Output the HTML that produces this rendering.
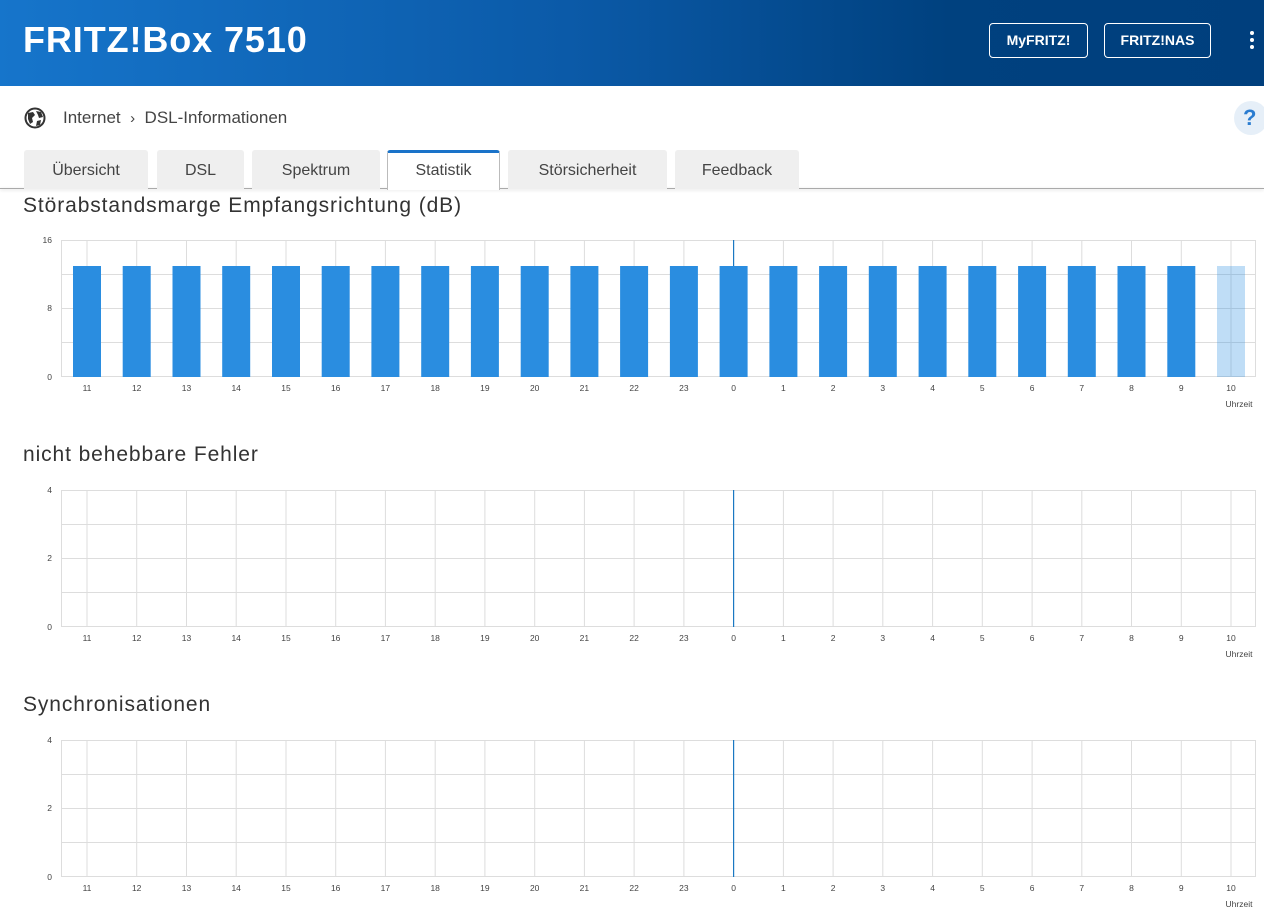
<!DOCTYPE html>
<html><head><meta charset="utf-8">
<style>
*{margin:0;padding:0;box-sizing:border-box}
body{width:1264px;height:913px;overflow:hidden;background:#fff;font-family:"Liberation Sans",sans-serif;color:#333;position:relative}
.hdr{position:absolute;left:0;top:0;width:1264px;height:86px;background:linear-gradient(90deg,#1675cb 0%,#0b5aa8 45%,#00417f 75%,#003f7d 100%)}
.logo{position:absolute;left:23px;top:19px;font-size:36px;font-weight:bold;color:#fff;letter-spacing:0.9px}
.btn{position:absolute;top:23px;height:35px;border:1px solid #fff;border-radius:4px;color:#fff;font-weight:bold;font-size:14px;text-align:center;line-height:33px}
.dots{position:absolute;left:1250px;top:31px;width:5px}
.dots i{display:block;width:4px;height:4px;border-radius:2px;background:#fff;margin-bottom:3px}
.bc{position:absolute;top:108px;left:63px;font-size:17px;color:#444}
.help{position:absolute;left:1234px;top:101px;width:34px;height:34px;border-radius:17px;background:#e6eff8;color:#2a7cd0;font-weight:bold;font-size:22px;line-height:34px;text-indent:9px}
.tab{position:absolute;top:150px;height:39px;background:#efefef;border-radius:3px 3px 0 0;font-size:16px;color:#444;text-align:center;line-height:42px}
.tab.act{background:#fff;border:1px solid #bbb;border-bottom:none;border-top:3px solid #1a73c9;line-height:36px;height:40px}
.line{position:absolute;left:0;top:188px;width:1264px;height:1px;background:#aaa;box-shadow:0 1px 3px rgba(0,0,0,.2)}
h2{position:absolute;left:23px;font-weight:normal;font-size:21px;color:#333;letter-spacing:0.9px}
svg{position:absolute;left:0}
svg text{font-family:"Liberation Sans",sans-serif;font-size:8.5px;fill:#444}
</style></head><body>
<div class="hdr">
<div class="logo">FRITZ!Box 7510</div>
<div class="btn" style="left:989px;width:99px">MyFRITZ!</div>
<div class="btn" style="left:1104px;width:107px">FRITZ!NAS</div>
<div class="dots"><i></i><i></i><i></i></div>
</div>
<svg style="left:24px;top:107px" width="22" height="22" viewBox="0 0 22 22"><circle cx="11" cy="11" r="9.5" fill="none" stroke="#333" stroke-width="2"/><path d="M4 6 L9 5 L11 8 L8 11 L9 15 L6 17 L4 12Z M12 4 L17 5 L19 10 L15 11 L14 8Z M13 14 L17 13 L16 18 L12 19Z" fill="#333"/></svg>
<div class="bc">Internet&nbsp;&nbsp;<span style="font-size:15px">&#8250;</span>&nbsp;&nbsp;DSL-Informationen</div>
<div class="help">?</div>
<div class="line"></div>
<div class="tab" style="left:24px;width:124px">Übersicht</div>
<div class="tab" style="left:157px;width:87px">DSL</div>
<div class="tab" style="left:252px;width:128px">Spektrum</div>
<div class="tab act" style="left:387px;width:113px">Statistik</div>
<div class="tab" style="left:508px;width:159px">Störsicherheit</div>
<div class="tab" style="left:675px;width:124px">Feedback</div>

<h2 style="top:194px">Störabstandsmarge Empfangsrichtung (dB)</h2>
<h2 style="top:443px">nicht behebbare Fehler</h2>
<h2 style="top:693px">Synchronisationen</h2>

<svg style="top:230px" width="1264" height="185" viewBox="0 -10 1264 185">
<g stroke="#ddd" stroke-width="1" fill="none">
<path d="M61 0.5H1256M61 34.5H1256M61 68.5H1256M61 102.5H1256M61 136.5H1256M61.5 0V137M1255.5 0V137"/>
<path d="M87 0V137M136.7 0V137M186.5 0V137M236.2 0V137M286 0V137M335.7 0V137M385.4 0V137M435.2 0V137M484.9 0V137M534.7 0V137M584.4 0V137M634.1 0V137M683.9 0V137M783.4 0V137M833.1 0V137M882.8 0V137M932.6 0V137M982.3 0V137M1032.1 0V137M1081.8 0V137M1131.5 0V137M1181.3 0V137M1231 0V137"/>
</g>
<path d="M733.6 0V137" stroke="#1a78c2" stroke-width="1.2"/>
<g fill="#2a8de0">
<rect x="73" y="26" width="28" height="111"/><rect x="122.7" y="26" width="28" height="111"/><rect x="172.5" y="26" width="28" height="111"/><rect x="222.2" y="26" width="28" height="111"/><rect x="272" y="26" width="28" height="111"/><rect x="321.7" y="26" width="28" height="111"/><rect x="371.4" y="26" width="28" height="111"/><rect x="421.2" y="26" width="28" height="111"/><rect x="470.9" y="26" width="28" height="111"/><rect x="520.7" y="26" width="28" height="111"/><rect x="570.4" y="26" width="28" height="111"/><rect x="620.1" y="26" width="28" height="111"/><rect x="669.9" y="26" width="28" height="111"/><rect x="719.6" y="26" width="28" height="111"/><rect x="769.4" y="26" width="28" height="111"/><rect x="819.1" y="26" width="28" height="111"/><rect x="868.8" y="26" width="28" height="111"/><rect x="918.6" y="26" width="28" height="111"/><rect x="968.3" y="26" width="28" height="111"/><rect x="1018.1" y="26" width="28" height="111"/><rect x="1067.8" y="26" width="28" height="111"/><rect x="1117.5" y="26" width="28" height="111"/><rect x="1167.3" y="26" width="28" height="111"/>
<rect x="1217" y="26" width="28" height="111" fill="#2a8de0" fill-opacity="0.3"/>
</g>
<text x="52" y="3" text-anchor="end">16</text><text x="52" y="71" text-anchor="end">8</text><text x="52" y="140" text-anchor="end">0</text>
<g text-anchor="middle"><text x="87" y="151">11</text><text x="136.7" y="151">12</text><text x="186.5" y="151">13</text><text x="236.2" y="151">14</text><text x="286" y="151">15</text><text x="335.7" y="151">16</text><text x="385.4" y="151">17</text><text x="435.2" y="151">18</text><text x="484.9" y="151">19</text><text x="534.7" y="151">20</text><text x="584.4" y="151">21</text><text x="634.1" y="151">22</text><text x="683.9" y="151">23</text><text x="733.6" y="151">0</text><text x="783.4" y="151">1</text><text x="833.1" y="151">2</text><text x="882.8" y="151">3</text><text x="932.6" y="151">4</text><text x="982.3" y="151">5</text><text x="1032.1" y="151">6</text><text x="1081.8" y="151">7</text><text x="1131.5" y="151">8</text><text x="1181.3" y="151">9</text><text x="1231" y="151">10</text><text x="1239" y="167">Uhrzeit</text></g>
</svg>

<svg style="top:480px" width="1264" height="185" viewBox="0 -10 1264 185">
<g stroke="#ddd" stroke-width="1" fill="none">
<path d="M61 0.5H1256M61 34.5H1256M61 68.5H1256M61 102.5H1256M61 136.5H1256M61.5 0V137M1255.5 0V137"/>
<path d="M87 0V137M136.7 0V137M186.5 0V137M236.2 0V137M286 0V137M335.7 0V137M385.4 0V137M435.2 0V137M484.9 0V137M534.7 0V137M584.4 0V137M634.1 0V137M683.9 0V137M783.4 0V137M833.1 0V137M882.8 0V137M932.6 0V137M982.3 0V137M1032.1 0V137M1081.8 0V137M1131.5 0V137M1181.3 0V137M1231 0V137"/>
</g>
<path d="M733.6 0V137" stroke="#1a78c2" stroke-width="1.2"/>
<text x="52" y="3" text-anchor="end">4</text><text x="52" y="71" text-anchor="end">2</text><text x="52" y="140" text-anchor="end">0</text>
<g text-anchor="middle"><text x="87" y="151">11</text><text x="136.7" y="151">12</text><text x="186.5" y="151">13</text><text x="236.2" y="151">14</text><text x="286" y="151">15</text><text x="335.7" y="151">16</text><text x="385.4" y="151">17</text><text x="435.2" y="151">18</text><text x="484.9" y="151">19</text><text x="534.7" y="151">20</text><text x="584.4" y="151">21</text><text x="634.1" y="151">22</text><text x="683.9" y="151">23</text><text x="733.6" y="151">0</text><text x="783.4" y="151">1</text><text x="833.1" y="151">2</text><text x="882.8" y="151">3</text><text x="932.6" y="151">4</text><text x="982.3" y="151">5</text><text x="1032.1" y="151">6</text><text x="1081.8" y="151">7</text><text x="1131.5" y="151">8</text><text x="1181.3" y="151">9</text><text x="1231" y="151">10</text><text x="1239" y="167">Uhrzeit</text></g>
</svg>

<svg style="top:730px" width="1264" height="185" viewBox="0 -10 1264 185">
<g stroke="#ddd" stroke-width="1" fill="none">
<path d="M61 0.5H1256M61 34.5H1256M61 68.5H1256M61 102.5H1256M61 136.5H1256M61.5 0V137M1255.5 0V137"/>
<path d="M87 0V137M136.7 0V137M186.5 0V137M236.2 0V137M286 0V137M335.7 0V137M385.4 0V137M435.2 0V137M484.9 0V137M534.7 0V137M584.4 0V137M634.1 0V137M683.9 0V137M783.4 0V137M833.1 0V137M882.8 0V137M932.6 0V137M982.3 0V137M1032.1 0V137M1081.8 0V137M1131.5 0V137M1181.3 0V137M1231 0V137"/>
</g>
<path d="M733.6 0V137" stroke="#1a78c2" stroke-width="1.2"/>
<text x="52" y="3" text-anchor="end">4</text><text x="52" y="71" text-anchor="end">2</text><text x="52" y="140" text-anchor="end">0</text>
<g text-anchor="middle"><text x="87" y="151">11</text><text x="136.7" y="151">12</text><text x="186.5" y="151">13</text><text x="236.2" y="151">14</text><text x="286" y="151">15</text><text x="335.7" y="151">16</text><text x="385.4" y="151">17</text><text x="435.2" y="151">18</text><text x="484.9" y="151">19</text><text x="534.7" y="151">20</text><text x="584.4" y="151">21</text><text x="634.1" y="151">22</text><text x="683.9" y="151">23</text><text x="733.6" y="151">0</text><text x="783.4" y="151">1</text><text x="833.1" y="151">2</text><text x="882.8" y="151">3</text><text x="932.6" y="151">4</text><text x="982.3" y="151">5</text><text x="1032.1" y="151">6</text><text x="1081.8" y="151">7</text><text x="1131.5" y="151">8</text><text x="1181.3" y="151">9</text><text x="1231" y="151">10</text><text x="1239" y="167">Uhrzeit</text></g>
</svg>
</body></html>
